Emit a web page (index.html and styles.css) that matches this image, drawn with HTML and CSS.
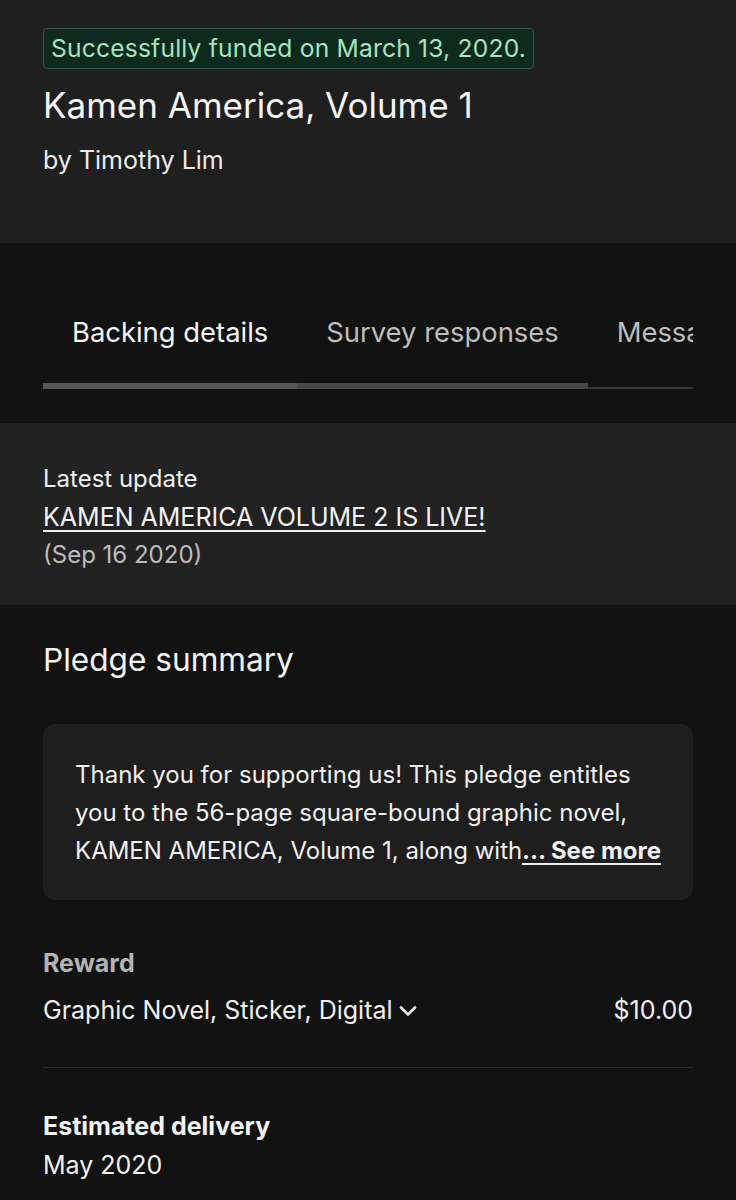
FILE: index.html
```html
<!DOCTYPE html>
<html lang="en">
<head>
<meta charset="utf-8">
<title>Kamen America, Volume 1</title>
<link rel="stylesheet" href="styles.css">
</head>
<body>
<header class="header">
  <div class="badge">Successfully funded on March 13, 2020.</div>
  <h1 class="title">Kamen America, Volume 1</h1>
  <p class="byline">by Timothy Lim</p>
</header>

<nav class="tabs-section">
  <div class="tabs">
    <div class="tab tab-active">Backing details</div>
    <div class="tab tab-second">Survey responses</div>
    <div class="tab tab-third">Messages</div>
  </div>
</nav>

<section class="update">
  <div class="update-label">Latest update</div>
  <a class="update-link" href="#">KAMEN AMERICA VOLUME 2 IS LIVE!</a>
  <div class="update-date">(Sep 16 2020)</div>
</section>

<section class="pledge">
  <h2 class="pledge-title">Pledge summary</h2>
  <div class="summary-box">
    <div class="summary-clip">
      <p class="summary-text">Thank you for supporting us! This pledge entitles you to the 56-page square-bound graphic novel, KAMEN AMERICA, Volume 1, along with an exclusive sticker and a digital copy of the book delivered to your inbox.</p>
      <a class="see-more" href="#">... See more</a>
    </div>
  </div>

  <div class="field field-reward">
    <div class="field-label field-label-muted">Reward</div>
    <div class="reward-row">
      <span class="reward-name">Graphic Novel, Sticker, Digital
        <svg class="chevron" width="18" height="12" viewBox="0 0 18 12"><path d="M2 2.5 L9 9.5 L16 2.5" fill="none" stroke="#e0e0e0" stroke-width="2.8" stroke-linecap="round" stroke-linejoin="round"/></svg>
      </span>
      <span class="reward-price">$10.00</span>
    </div>
  </div>

  <hr class="divider">

  <div class="field">
    <div class="field-label">Estimated delivery</div>
    <div class="field-value">May 2020</div>
  </div>
</section>
</body>
</html>
```

FILE: styles.css
```css
* { box-sizing: border-box; }

html, body {
  margin: 0;
  padding: 0;
  background: #121212;
}

body {
  font-family: Inter, "Noto Sans", "Liberation Sans", sans-serif;
  color: #f2f2f2;
  width: 736px;
  height: 1200px;
  overflow: hidden;
}

.header {
  background: #1f1f1f;
  height: 243px;
  padding: 28px 43px 0 43px;
}

.badge {
  display: inline-block;
  height: 41px;
  line-height: 39px;
  padding: 0 7px;
  font-size: 24.6px;
  letter-spacing: 0.2px;
  color: #a6e3be;
  background: #0e2a1f;
  border: 1px solid #3a5546;
  border-radius: 4px;
}

.title {
  margin: 10px 0 0 0;
  font-size: 35px;
  font-weight: 400;
  line-height: 52px;
  color: #f5f5f5;
}

.byline {
  margin: 12px 0 0 0;
  font-size: 25px;
  line-height: 34px;
  color: #ececec;
}

.tabs-section {
  background: #121212;
  padding: 73px 43px 34px 43px;
}

.tabs {
  display: flex;
  overflow: hidden;
  white-space: nowrap;
  align-items: flex-end;
}

.tab {
  flex: none;
  padding: 0 29px 35px 29px;
  font-size: 27.4px;
  line-height: 32px;
  color: #bdbdbd;
}

.tab-active {
  color: #f5f5f5;
  border-bottom: 6px solid #575757;
}

.tab-second {
  border-bottom: 6px solid #484848;
}

.tab-third {
  padding-bottom: 39px;
  border-bottom: 2px solid #363636;
}

.update {
  background: #222222;
  height: 182px;
  padding: 37px 43px 0 43px;
  font-size: 24px;
  line-height: 38px;
}

.update-label {
  color: #f0f0f0;
}

.update-link {
  display: block;
  color: #f2f2f2;
  font-size: 25px;
  text-decoration: underline;
  text-underline-offset: 4px;
  text-decoration-thickness: 2px;
}

.update-date {
  color: #bcbcbc;
}

.pledge {
  padding: 35px 43px 0 43px;
}

.pledge-title {
  margin: 0;
  font-size: 31.6px;
  font-weight: 400;
  line-height: 40px;
  color: #f2f2f2;
}

.summary-box {
  margin-top: 44px;
  background: #1e1e1e;
  border-radius: 12px;
  padding: 32px 32px 30px 32px;
}

.summary-clip {
  position: relative;
  max-height: 114px;
  overflow: hidden;
}

.summary-text {
  margin: 0;
  font-size: 24px;
  line-height: 38px;
  color: #f0f0f0;
}

.see-more {
  position: absolute;
  right: 0;
  bottom: 0;
  background: #1e1e1e;
  font-size: 24px;
  line-height: 38px;
  font-weight: 700;
  color: #f0f0f0;
  text-decoration: underline;
  text-underline-offset: 4px;
  text-decoration-thickness: 2px;
}

.field {
  font-size: 25px;
  line-height: 38px;
}

.field-reward {
  margin-top: 44px;
}

.field-label {
  font-weight: 700;
  color: #f2f2f2;
}

.field-label-muted {
  color: #b3b3b3;
}

.reward-row {
  display: flex;
  justify-content: space-between;
  align-items: center;
  margin-top: 9px;
}

.reward-name {
  display: inline-flex;
  align-items: center;
  gap: 6px;
  color: #f0f0f0;
}

.chevron {
  display: block;
  margin-top: 2px;
}

.reward-price {
  color: #f0f0f0;
}

.divider {
  margin: 38px 0 39px 0;
  border: 0;
  height: 1px;
  background: #2c2c2c;
}

.field-value {
  color: #f0f0f0;
  margin-top: 1px;
}
```
